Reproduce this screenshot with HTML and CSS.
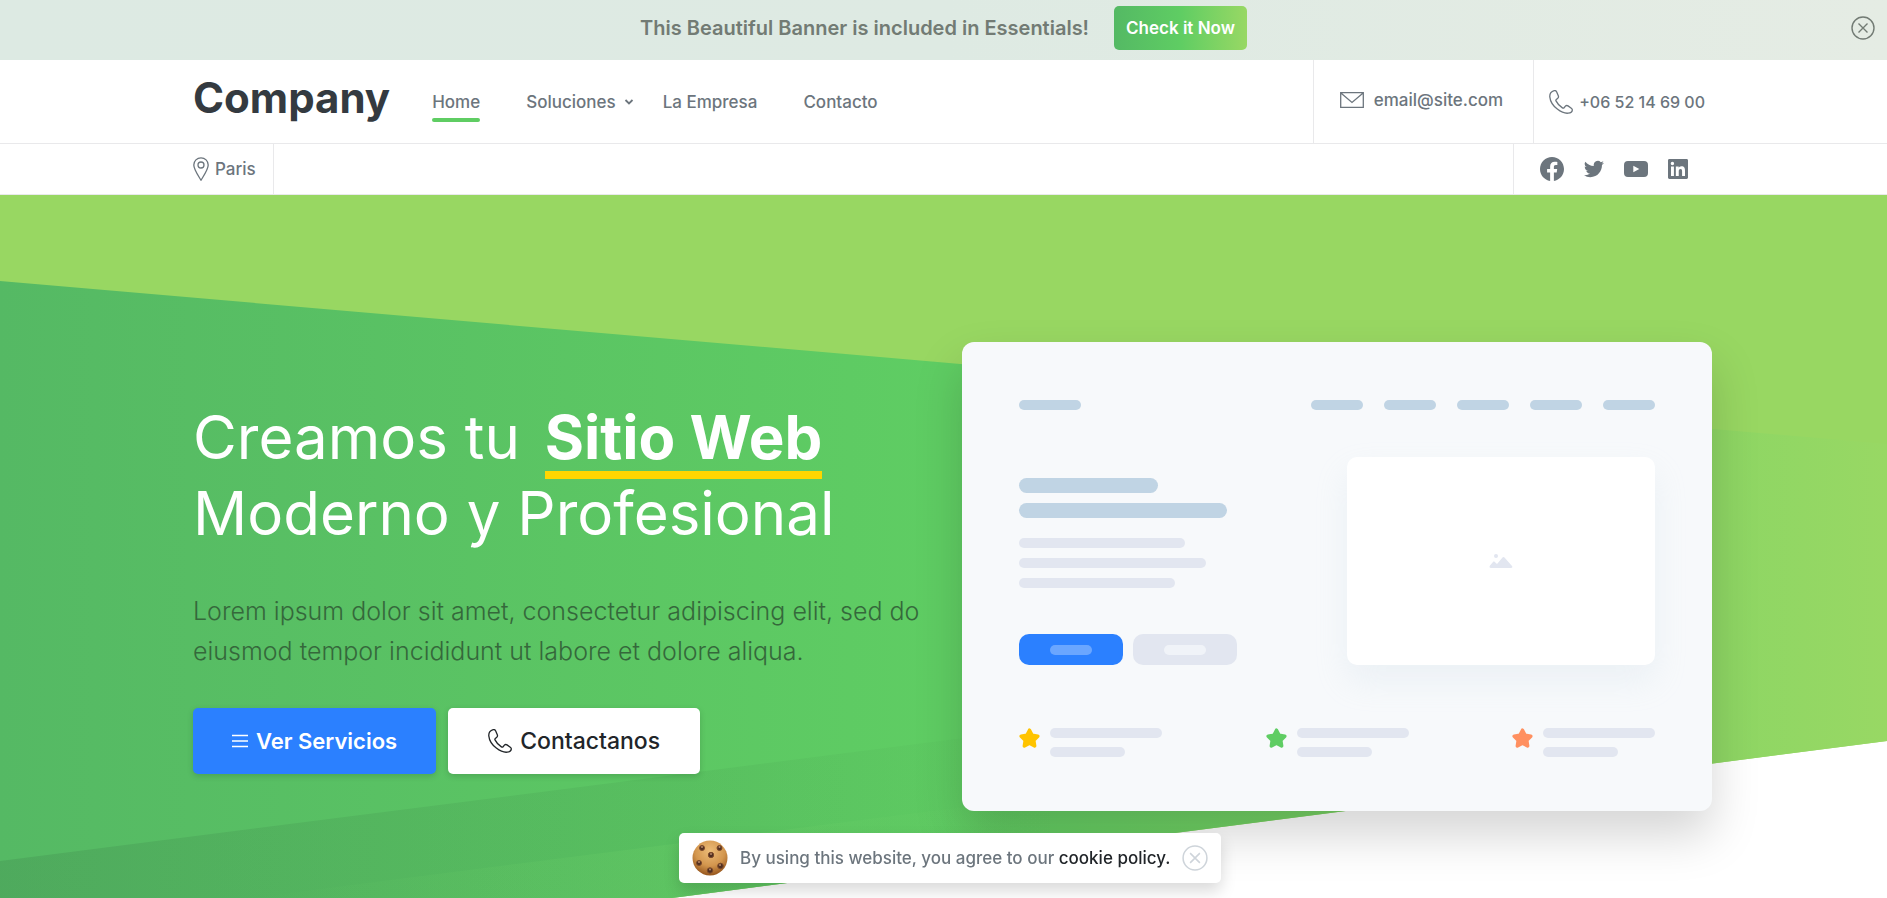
FILE: index.html
```html
<!DOCTYPE html>
<html lang="es">
<head>
<meta charset="utf-8">
<title>Company</title>
<link rel="stylesheet" href="styles.css">
</head>
<body>
<svg class="sprite" width="0" height="0" aria-hidden="true">
  <symbol id="phone" viewBox="0 0 24 24"><path d="M5.2.7C2.6 1.5.6 4 .8 6.900 1.300 12 4.500 16.200 8.300 19.100c3.500 2.700 7.400 4.500 10.900 4.100 2.300-.3 4-1.800 4.100-3.100.1-.9-.3-1.400-1-1.900l-3.300-2.300c-1-.7-2-.4-2.600.3l-1.300 1.500c-.5.6-1.100.6-1.700.2-2.700-1.700-5-4.100-6.400-7-.3-.6-.2-1.100.3-1.500l1.500-1.200c.8-.6.9-1.400.5-2.400L7.700 1.900C7.200.8 6.300.4 5.200.7z" fill="none" stroke="currentColor" stroke-width="1.300" stroke-linejoin="round"/></symbol>
  <symbol id="cross" viewBox="0 0 24 24"><circle cx="12" cy="12" r="11" fill="none" stroke="currentColor" stroke-width="1.400"/><path d="M7.500 7.500l9 9M16.500 7.500l-9 9" stroke="currentColor" stroke-width="1.400" fill="none"/></symbol>
  <symbol id="star" viewBox="0 0 24 24"><path d="M12 2.500l3 5.800 6.500 1.100-4.600 4.600 1 6.500-5.900-3-5.900 3 1-6.500L2.500 9.400 9 8.300z" fill="currentColor" stroke="currentColor" stroke-width="4" stroke-linejoin="round"/></symbol>
</svg>

<aside class="banner">
  <p class="banner-text">This Beautiful Banner is included in Essentials!</p>
  <button class="banner-button" type="button">Check it Now</button>
  <button class="banner-close" type="button" aria-label="Close banner"><svg class="icon-24"><use href="#cross"/></svg></button>
</aside>

<header class="header">
  <div class="header-row container">
    <a class="logo" href="#">Company</a>
    <nav class="nav">
      <a class="nav-link active" href="#">Home</a>
      <a class="nav-link with-menu" href="#">Soluciones
        <svg class="chevron" viewBox="0 0 10 8"><path d="M1.500 2l3.500 3.500L8.500 2" fill="none" stroke="currentColor" stroke-width="1.800"/></svg>
      </a>
      <a class="nav-link" href="#">La Empresa</a>
      <a class="nav-link" href="#">Contacto</a>
    </nav>
    <a class="contact email" href="#">
      <svg class="icon-24" viewBox="0 0 24 24"><path d="M.7 4.700h22.600v14.600H.7zM.9 5l11.100 9.500L23.100 5" fill="none" stroke="currentColor" stroke-width="1.300"/></svg>
      email@site.com
    </a>
    <a class="contact tel" href="#"><svg class="icon-24"><use href="#phone"/></svg>+06 52 14 69 00</a>
  </div>
  <div class="sub-bar">
    <div class="sub-row container">
      <a class="place" href="#">
        <svg class="pin" viewBox="0 0 16 24"><path d="M8 23.200C5.500 19 .8 12.500.8 8a7.200 7.200 0 0 1 14.400 0c0 4.500-4.700 11-7.200 15.200z" fill="none" stroke="currentColor" stroke-width="1.300"/><circle cx="8" cy="8" r="3" fill="none" stroke="currentColor" stroke-width="1.300"/></svg>
        Paris
      </a>
      <div class="social">
        <a href="#" aria-label="Facebook"><svg class="icon-24" viewBox="0 0 24 24"><path d="M24 12.070C24 5.410 18.630 0 12 0S0 5.410 0 12.070c0 6.030 4.390 11.030 10.130 11.930v-8.440H7.080v-3.490h3.050V9.410c0-3.020 1.790-4.690 4.530-4.690 1.310 0 2.690.24 2.690.24v2.970h-1.520c-1.490 0-1.950.93-1.950 1.880v2.260h3.320l-.53 3.490h-2.790V24C19.610 23.100 24 18.100 24 12.070z" fill="currentColor"/></svg></a>
        <a href="#" aria-label="Twitter"><svg class="icon-20" viewBox="0 0 24 24"><path d="M23.950 4.570a10 10 0 0 1-2.820.77 4.960 4.960 0 0 0 2.160-2.720c-.95.55-2 .95-3.130 1.180a4.920 4.920 0 0 0-8.380 4.480C7.690 8.090 4.070 6.130 1.640 3.160a4.920 4.920 0 0 0 1.520 6.570 4.900 4.900 0 0 1-2.230-.61v.06a4.920 4.920 0 0 0 3.950 4.830 5 5 0 0 1-2.210.08 4.940 4.940 0 0 0 4.600 3.420A9.870 9.870 0 0 1 0 19.540a13.990 13.990 0 0 0 7.550 2.210c9.050 0 14-7.500 14-13.980 0-.21 0-.42-.02-.63a9.940 9.940 0 0 0 2.460-2.550z" fill="currentColor"/></svg></a>
        <a href="#" aria-label="YouTube"><svg class="icon-24" viewBox="0 0 24 24"><path fill-rule="evenodd" d="M4 4h16a4 4 0 0 1 4 4v8a4 4 0 0 1-4 4H4a4 4 0 0 1-4-4V8a4 4 0 0 1 4-4zm5.300 4.800v6.400l6-3.200z" fill="currentColor"/></svg></a>
        <a href="#" aria-label="LinkedIn"><svg class="icon-20" viewBox="0 0 24 24"><path fill-rule="evenodd" d="M1.700 0h20.600C23.300 0 24 .7 24 1.700v20.600c0 1-.7 1.700-1.700 1.700H1.700C.7 24 0 23.300 0 22.300V1.700C0 .7.700 0 1.700 0zM3.600 9v11.400h3.500V9zM5.300 3.400a2 2 0 1 0 0 4.100 2 2 0 0 0 0-4.100zM9.400 9v11.400h3.500v-5.600c0-1.500.3-2.900 2.100-2.900s1.900 1.700 1.900 3v5.500h3.500v-6.200c0-3.100-.7-5.400-4.300-5.400-1.700 0-2.900.9-3.300 1.800V9z" fill="currentColor"/></svg></a>
      </div>
    </div>
  </div>
</header>

<main class="hero">
  <svg class="hero-shapes" viewBox="0 0 1887 703" preserveAspectRatio="none" aria-hidden="true">
    <defs>
      <linearGradient id="brand"><stop offset="0" stop-color="#55b964"/><stop offset=".5" stop-color="#5fcd63"/><stop offset="1" stop-color="#98d864"/></linearGradient>
      <linearGradient id="shade" gradientUnits="userSpaceOnUse" x1="0" y1="0" x2="1150" y2="0"><stop offset="0" stop-color="#3a7a48" stop-opacity=".24"/><stop offset=".6" stop-color="#3f8a48" stop-opacity=".13"/><stop offset="1" stop-color="#4f9a4c" stop-opacity="0"/></linearGradient>
      <linearGradient id="glow" gradientUnits="userSpaceOnUse" x1="250" y1="0" x2="1050" y2="0"><stop offset="0" stop-color="#6cd068" stop-opacity="0"/><stop offset=".6" stop-color="#6cd068" stop-opacity=".3"/><stop offset="1" stop-color="#6cd068" stop-opacity="0"/></linearGradient>
    </defs>
    <path d="M0 0H1887V546L672 703H0z" fill="#98d762"/>
    <path d="M0 86L1887 249V546L672 703H0z" fill="url(#brand)"/>
    <path d="M0 666L1050 532V654L672 703H0z" fill="url(#shade)"/>
    <path d="M250 703L1050 601V654L672 703z" fill="url(#glow)"/>
  </svg>
  <div class="hero-row container">
    <div class="hero-copy">
      <h1 class="title">Creamos tu <strong class="mark">Sitio Web</strong> <span class="title-line">Moderno y Profesional</span></h1>
      <p class="lead">Lorem ipsum dolor sit amet, consectetur adipiscing elit, sed do eiusmod tempor incididunt ut labore et dolore aliqua.</p>
      <div class="actions">
        <button class="button primary" type="button"><svg class="menu-icon" viewBox="0 0 16 16"><path d="M0 2.500h16M0 8h16M0 13.500h16" stroke="currentColor" stroke-width="1.500"/></svg>Ver Servicios</button>
        <button class="button light" type="button"><svg class="icon-24"><use href="#phone"/></svg>Contactanos</button>
      </div>
    </div>
    <div class="mockup">
      <div class="mock-nav"><i class="bar blue w62"></i><div class="mock-links"><i class="bar blue w52"></i><i class="bar blue w52"></i><i class="bar blue w52"></i><i class="bar blue w52"></i><i class="bar blue w52"></i></div></div>
      <div class="mock-body">
        <div class="mock-copy">
          <i class="bar blue tall w139"></i><i class="bar blue tall w208"></i>
          <div class="mock-lines"><i class="bar w166"></i><i class="bar w187"></i><i class="bar w156"></i></div>
          <div class="mock-actions"><span class="mock-button on"><i class="bar w42"></i></span><span class="mock-button"><i class="bar w42"></i></span></div>
        </div>
        <div class="mock-photo"><svg class="photo-icon" viewBox="0 0 24 14"><circle cx="7" cy="2" r="2" fill="currentColor"/><path d="M2 14c-1.500 0-2-1.200-1-2.500L4 8c.6-.6 1.200-.6 1.800 0L8 10l5.500-6.500c.6-.7 1.400-.7 2 0L23 12c.8 1 .2 2-1 2z" fill="currentColor"/></svg></div>
      </div>
      <div class="mock-features">
        <div class="feature"><svg class="star gold"><use href="#star"/></svg><div class="feature-lines"><i class="bar w112"></i><i class="bar w75"></i></div></div>
        <div class="feature"><svg class="star green"><use href="#star"/></svg><div class="feature-lines"><i class="bar w112"></i><i class="bar w75"></i></div></div>
        <div class="feature"><svg class="star coral"><use href="#star"/></svg><div class="feature-lines"><i class="bar w112"></i><i class="bar w75"></i></div></div>
      </div>
    </div>
  </div>
</main>

<div class="cookie-bar" role="dialog" aria-label="Cookies">
  <svg class="cookie" viewBox="0 0 36 36" aria-hidden="true">
    <defs><radialGradient id="dough" cx=".5" cy=".3" r=".7"><stop offset="0" stop-color="#ecbc78"/><stop offset=".6" stop-color="#d3964e"/><stop offset="1" stop-color="#96561d"/></radialGradient></defs>
    <circle cx="18" cy="18" r="17.500" fill="url(#dough)"/>
    <g fill="#4f2f22" stroke="#7d4a2a" stroke-width="1"><circle cx="10" cy="8" r="2.500"/><circle cx="27.500" cy="8" r="2.500"/><circle cx="19" cy="15" r="2.700"/><circle cx="7" cy="23" r="2.500"/><circle cx="28.500" cy="26" r="2.800"/><circle cx="18" cy="30.500" r="2.700"/></g>
    <g fill="#b98a68"><circle cx="10" cy="7" r="1"/><circle cx="27.500" cy="7" r="1"/><circle cx="19" cy="14" r="1"/><circle cx="7" cy="22" r="1"/><circle cx="28" cy="25" r="1"/><circle cx="18" cy="29.500" r="1"/></g>
  </svg>
  <p class="cookie-text">By using this website, you agree to our <a href="#">cookie policy.</a></p>
  <button class="cookie-close" type="button" aria-label="Close"><svg class="icon-26"><use href="#cross"/></svg></button>
</div>
</body>
</html>
```
FILE: styles.css
```css
* { box-sizing: border-box; }
body { margin: 0; min-height: 100vh; display: flex; flex-direction: column; overflow: hidden; background: #fff; color: #6c757d; font: 500 17px/24px Inter, sans-serif; }
p, h1 { margin: 0; }
a { color: inherit; text-decoration: none; }
button { font: inherit; border: 0; padding: 0; background: none; color: inherit; cursor: pointer; }
svg, i { display: block; flex: none; }
.sprite { position: absolute; }
.icon-20 { width: 20px; height: 20px; }
.icon-24 { width: 24px; height: 24px; }
.icon-26 { width: 26px; height: 26px; }
.container { padding: 0 193px; display: flex; }

.banner { position: relative; height: 60px; padding-bottom: 4px; display: flex; align-items: center; justify-content: center; gap: 25px; background: linear-gradient(90deg, #ddeae3, #deeae3 50%, #e5ece4); color: #727b74; }
.banner-text { font-size: 20px; font-weight: 600; }
.banner-button { height: 44px; padding: 0 12px; border-radius: 5px; color: #fff; font-weight: 600; background: linear-gradient(90deg, #54b964, #5fcd63 50%, #98d864); }
.banner-close { position: absolute; right: 12px; top: 16px; }

.header-row { height: 83px; align-items: stretch; }
.logo { align-self: center; margin-right: 42px; padding-bottom: 8px; color: #343a40; font-size: 42px; line-height: 56px; font-weight: 700; }
.nav { flex: 1; display: flex; align-items: center; gap: 46px; }
.nav-link { position: relative; display: flex; align-items: center; gap: 8px; }
.with-menu { margin-right: -17px; }
.active::after { content: ""; position: absolute; left: 0; right: 0; top: 28px; height: 4px; border-radius: 2px; background: #5fcd63; }
.chevron { width: 10px; height: 8px; }
.contact { display: flex; align-items: center; border-left: 1px solid #e9e9eb; }
.email { gap: 10px; padding: 0 30px 4px 26px; }
.tel { gap: 6px; padding-left: 15px; margin-right: -11px; font-size: 16px; }
.sub-bar { border: solid #e9e9eb; border-width: 1px 0; }
.sub-row { height: 50px; justify-content: space-between; }
.place { display: flex; align-items: center; gap: 6px; padding-right: 17px; border-right: 1px solid #e9e9eb; }
.pin { width: 16px; height: 24px; }
.social { display: flex; align-items: center; gap: 20px; padding: 0 6px 0 26px; border-left: 1px solid #e9e9eb; }

.hero { position: relative; flex: 1; min-height: 703px; }
.hero-shapes { position: absolute; width: 100%; height: 100%; }
.hero-row { position: relative; justify-content: space-between; padding-top: 147px; }
.hero-copy { width: 740px; padding-top: 57px; }
.title { color: #fff; font-size: 60px; line-height: 76px; font-weight: 400; white-space: nowrap; }
.title-line { display: block; }
.mark { position: relative; display: inline-block; margin-left: 8px; font-weight: 700; }
.mark::after { content: ""; position: absolute; left: 0; right: 0; top: 72px; height: 8px; background: #ffd600; }
.lead { margin-top: 40px; color: #35683b; font-size: 25px; line-height: 40px; font-weight: 300; }
.actions { display: flex; gap: 12px; margin-top: 37px; }
.button { height: 66px; padding: 0 39px; display: flex; align-items: center; gap: 8px; border-radius: 5px; font-size: 22px; font-weight: 600; box-shadow: 0 2px 6px rgba(0, 0, 0, .15); }
.primary { background: #2b80ff; color: #fff; }
.light { padding: 0 40px; background: #fff; color: #212529; font-size: 23px; font-weight: 500; }
.menu-icon { width: 16px; height: 16px; }

.mockup { width: 750px; height: 469px; margin-right: -18px; padding: 58px 57px 0; border-radius: 12px; background: #f7f9fb; box-shadow: 0 24px 48px rgba(0, 0, 0, .17); }
.bar { height: 10px; border-radius: 5px; background: #e2e6f0; }
.blue { background: #c0d4e4; }
.tall { height: 15px; border-radius: 8px; }
.w42 { width: 42px; } .w52 { width: 52px; } .w62 { width: 62px; } .w75 { width: 75px; } .w112 { width: 112px; }
.w139 { width: 139px; } .w156 { width: 156px; } .w166 { width: 166px; } .w187 { width: 187px; } .w208 { width: 208px; }
.mock-nav, .mock-body, .mock-features { display: flex; justify-content: space-between; }
.mock-links { display: flex; gap: 21px; }
.mock-body { margin-top: 47px; }
.mock-copy { display: flex; flex-direction: column; gap: 10px; padding-top: 21px; }
.mock-lines { display: flex; flex-direction: column; gap: 10px; margin-top: 10px; }
.mock-actions { display: flex; gap: 10px; margin-top: 36px; }
.mock-button { width: 104px; height: 31px; display: grid; place-items: center; border-radius: 10px; background: #e2e6f0; }
.mock-button .bar { background: #f0f3f8; }
.mock-button.on { background: #2b80ff; }
.mock-button.on .bar { background: #6aa6ff; }
.mock-photo { width: 308px; height: 208px; display: grid; place-items: center; border-radius: 10px; background: #fff; color: #e2e6f0; box-shadow: 0 16px 32px rgba(190, 212, 226, .2); }
.photo-icon { width: 24px; height: 14px; }
.mock-features { margin-top: 63px; }
.feature { display: flex; gap: 10px; }
.feature-lines { display: flex; flex-direction: column; gap: 9px; }
.star { width: 21px; height: 21px; }
.gold { color: #ffc400; }
.green { color: #5fcd63; }
.coral { color: #ff9060; }

.cookie-bar { position: fixed; left: 679px; bottom: 15px; height: 50px; padding: 0 13px; display: flex; align-items: center; gap: 12px; border-radius: 5px; background: #fff; box-shadow: 0 8px 16px rgba(0, 0, 0, .15); white-space: nowrap; }
.cookie { width: 36px; height: 36px; }
.cookie-text { font-size: 17px; }
.cookie-text a { color: #212529; }
.cookie-close { color: #ced4da; }
```
